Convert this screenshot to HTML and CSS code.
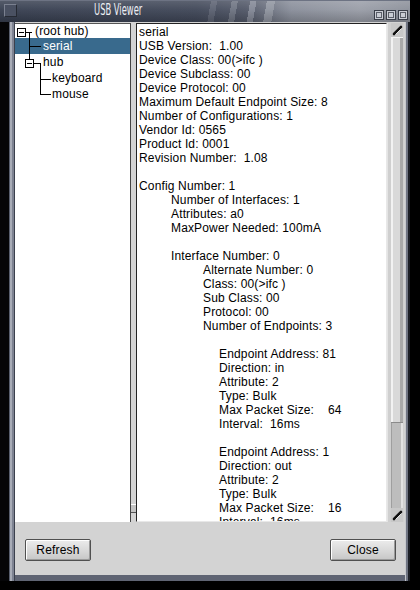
FILE: index.html
```html
<!DOCTYPE html>
<html>
<head>
<meta charset="utf-8">
<title>USB Viewer</title>
<link rel="stylesheet" href="styles.css">
</head>
<body>
<div class="window">
  <div class="titlebar">
    <span class="tb-btn"></span>
    <span class="title">USB Viewer</span>
    <span class="tb-right">
      <span class="mini"><span class="mini-in"></span></span>
      <span class="mini"><span class="mini-in"></span></span>
      <span class="mini"><span class="mini-in"></span></span>
    </span>
  </div>
  <div class="frame">
    <div class="client">
      <div class="panes">
        <div class="tree">
          <svg class="tree-lines" width="116" height="100" viewBox="0 0 116 100">
            <g fill="none" stroke="#000" stroke-width="1" shape-rendering="crispEdges">
              <rect x="2.5" y="4.5" width="8" height="8"/>
              <line x1="4" y1="8.5" x2="9" y2="8.5"/>
              <line x1="11" y1="8.5" x2="17" y2="8.5"/>
              <line x1="14.5" y1="8" x2="14.5" y2="35"/>
              <line x1="14.5" y1="22.5" x2="26" y2="22.5"/>
              <rect x="10.5" y="35.5" width="8" height="8"/>
              <line x1="12" y1="39.5" x2="17" y2="39.5"/>
              <line x1="19" y1="39.5" x2="26" y2="39.5"/>
              <line x1="25.5" y1="39" x2="25.5" y2="71"/>
              <line x1="25.5" y1="55.5" x2="36" y2="55.5"/>
              <line x1="25.5" y1="70.5" x2="36" y2="70.5"/>
            </g>
          </svg>
          <div class="node root">(root hub)</div>
          <div class="node l1 selected">serial</div>
          <div class="node l1">hub</div>
          <div class="node l2">keyboard</div>
          <div class="node l2">mouse</div>
        </div>
        <div class="splitter"><span class="grip"></span></div>
        <div class="info">
          <div class="ln">serial</div>
          <div class="ln">USB Version:  1.00</div>
          <div class="ln">Device Class: 00(&gt;ifc )</div>
          <div class="ln">Device Subclass: 00</div>
          <div class="ln">Device Protocol: 00</div>
          <div class="ln">Maximum Default Endpoint Size: 8</div>
          <div class="ln">Number of Configurations: 1</div>
          <div class="ln">Vendor Id: 0565</div>
          <div class="ln">Product Id: 0001</div>
          <div class="ln">Revision Number:  1.08</div>
          <div class="ln"></div>
          <div class="ln">Config Number: 1</div>
          <div class="ln i1">Number of Interfaces: 1</div>
          <div class="ln i1">Attributes: a0</div>
          <div class="ln i1">MaxPower Needed: 100mA</div>
          <div class="ln"></div>
          <div class="ln i1">Interface Number: 0</div>
          <div class="ln i2">Alternate Number: 0</div>
          <div class="ln i2">Class: 00(&gt;ifc )</div>
          <div class="ln i2">Sub Class: 00</div>
          <div class="ln i2">Protocol: 00</div>
          <div class="ln i2">Number of Endpoints: 3</div>
          <div class="ln"></div>
          <div class="ln i3">Endpoint Address: 81</div>
          <div class="ln i3">Direction: in</div>
          <div class="ln i3">Attribute: 2</div>
          <div class="ln i3">Type: Bulk</div>
          <div class="ln i3">Max Packet Size:    64</div>
          <div class="ln i3">Interval:  16ms</div>
          <div class="ln"></div>
          <div class="ln i3">Endpoint Address: 1</div>
          <div class="ln i3">Direction: out</div>
          <div class="ln i3">Attribute: 2</div>
          <div class="ln i3">Type: Bulk</div>
          <div class="ln i3">Max Packet Size:    16</div>
          <div class="ln i3">Interval:  16ms</div>
        </div>
        <div class="scrollbar">
          <div class="arrow">
            <svg width="12" height="13" viewBox="0 0 12 13">
              <line x1="3" y1="10" x2="10" y2="3" stroke="#111" stroke-width="2.6" stroke-linecap="round"/>
              <line x1="4.5" y1="10.5" x2="10.5" y2="4.5" stroke="#fff" stroke-width="0.8"/>
            </svg>
          </div>
          <div class="thumb"></div>
          <div class="trough"></div>
          <div class="arrow">
            <svg width="12" height="13" viewBox="0 0 12 13">
              <line x1="3" y1="10" x2="10" y2="3" stroke="#111" stroke-width="2.6" stroke-linecap="round"/>
              <line x1="4.5" y1="10.5" x2="10.5" y2="4.5" stroke="#fff" stroke-width="0.8"/>
            </svg>
          </div>
        </div>
      </div>
      <div class="actions">
        <button class="btn">Refresh</button>
        <button class="btn">Close</button>
      </div>
    </div>
  </div>
</div>
</body>
</html>
```
FILE: styles.css
```css
html, body {
  margin: 0;
  padding: 0;
  background: #000;
}
body {
  width: 420px;
  height: 590px;
  overflow: hidden;
  font-family: "Liberation Sans", Arial, sans-serif;
}
.window {
  width: 410px;
  height: 581px;
  display: flex;
  flex-direction: column;
  background: #3c414e;
}
.titlebar {
  height: 22px;
  flex: none;
  display: flex;
  align-items: flex-start;
  background:
    linear-gradient(to bottom, rgba(255,255,255,0.14), rgba(255,255,255,0.04) 40%, rgba(0,0,0,0.18)),
    linear-gradient(100deg, transparent 0 51%, #5c6272 51% 52.5%, transparent 52.5% 56%, #6e7482 56% 57.5%, transparent 57.5% 60.5%, #838896 60.5% 62%, transparent 62% 64.5%, #9095a0 64.5% 66.5%, transparent 66.5%),
    linear-gradient(to right, #384051 0%, #414859 48%, #525868 60%, #8a8f9b 71%, #9a9ea8 88%, #8c909a 100%);
  box-sizing: border-box;
  border-top: 1px solid #6d7383;
}
.tb-btn {
  width: 11px;
  height: 11px;
  margin: 3px 0 0 4px;
  border: 1px solid #7b8190;
  border-right-color: #262a33;
  border-bottom-color: #262a33;
  background: #4a5162;
  flex: none;
}
.title {
  margin: 1px 0 0 77px;
  font-family: "DejaVu Sans Condensed", "Liberation Sans Narrow", sans-serif;
  font-stretch: condensed;
  font-size: 15px;
  line-height: 17px;
  color: #eceef3;
  transform: scaleX(0.62);
  transform-origin: left center;
  white-space: nowrap;
}
.tb-right {
  margin: 9px 0 0 auto;
  display: flex;
  gap: 2px;
  padding-right: 2px;
}
.mini {
  width: 8px;
  height: 8px;
  border: 1px solid #3a3e48;
  background: #c9ccd3;
  display: flex;
  align-items: center;
  justify-content: center;
}
.mini-in {
  width: 4px;
  height: 4px;
  border: 1px solid #5a5e68;
}
.frame {
  flex: 1;
  display: flex;
  padding: 0 5px 6px 15px;
  background:
    linear-gradient(to right, #050507 0 9px, #585e6e 9px 10px, #a8acb7 10px 12px, #7e8392 12px 14px, #3b404d 14px 15px, transparent 15px),
    linear-gradient(to left, #1c1f26 0 2px, #6f7482 2px 4px, #c6c8cc 4px 5px, transparent 5px),
    #5f6473;
}
.client {
  flex: 1;
  display: flex;
  flex-direction: column;
  background: #d3d3d3;
}
.panes {
  height: 500px;
  box-sizing: border-box;
  padding: 1px 1px 0 0;
  display: flex;
}
.tree {
  width: 116px;
  flex: none;
  box-sizing: border-box;
  position: relative;
  background: #fff;
  border-top: 1px solid #555;
  border-right: 1px solid #444;
  font-size: 12px;
  letter-spacing: 0.15px;
  color: #000;
}
.tree-lines {
  position: absolute;
  left: 0;
  top: 0;
}
.node {
  height: 16px;
  line-height: 16px;
  white-space: pre;
}
.node.root {
  height: 14px;
  line-height: 15px;
  padding-left: 20px;
}
.node.l1 { padding-left: 28px; }
.node.l2 { padding-left: 37px; }
.node.selected {
  background: #396a8d;
  color: #fff;
}
.splitter {
  width: 5px;
  flex: none;
  display: flex;
  flex-direction: column;
  justify-content: flex-end;
  align-items: center;
  background: #d3d3d3;
}
.grip {
  width: 5px;
  height: 9px;
  margin-bottom: 9px;
  box-sizing: border-box;
  border-top: 1px solid #fff;
  border-bottom: 1px solid #555;
  background: #c4c4c4;
}
.info {
  width: 251px;
  flex: none;
  box-sizing: border-box;
  background: #fff;
  border-top: 1px solid #222;
  border-left: 1px solid #222;
  border-right: 1px solid #e8e8e8;
  border-bottom: 1px solid #e8e8e8;
  padding: 1px 2px 0 2px;
  overflow: hidden;
  font-size: 12px;
  line-height: 14px;
  letter-spacing: 0.15px;
  color: #000;
}
.ln {
  height: 14px;
  white-space: pre;
}
.i1 { padding-left: 32px; }
.i2 { padding-left: 64px; }
.i3 { padding-left: 80px; }
.scrollbar {
  width: 17px;
  flex: none;
  box-sizing: border-box;
  display: flex;
  flex-direction: column;
  padding: 0 1px 0 4px;
  background: linear-gradient(to right, #e4e4e4 0 1px, #cfcfcf 1px);
}
.arrow {
  height: 14px;
  flex: none;
  display: flex;
  align-items: center;
  justify-content: center;
  background: #c8c8c8;
}
.thumb {
  height: 386px;
  flex: none;
  box-sizing: border-box;
  background: linear-gradient(to right, #f2f2f2 0 2px, #d9d9d9 2px 9px, #a9a9a9 9px);
  border-bottom: 1px solid #8a8a8a;
  border-top: 1px solid #f4f4f4;
}
.trough {
  flex: 1;
  background: linear-gradient(to right, #9f9f9f 0 1px, #bdbdbd 1px 10px, #e2e2e2 10px);
}
.actions {
  flex: 1;
  display: flex;
  justify-content: space-between;
  align-items: flex-start;
  padding: 17px 9px 0 10px;
}
.btn {
  width: 66px;
  height: 22px;
  margin: 0;
  padding: 0;
  box-sizing: border-box;
  font-family: "Liberation Sans", Arial, sans-serif;
  font-size: 12px;
  letter-spacing: 0.2px;
  color: #000;
  background: linear-gradient(#ececec, #d6d6d6 60%, #c6c6c6);
  border: 1px solid #505050;
  border-radius: 2px;
  box-shadow: inset 1px 1px 0 #fff, inset -1px -1px 0 #9a9a9a;
}
```
